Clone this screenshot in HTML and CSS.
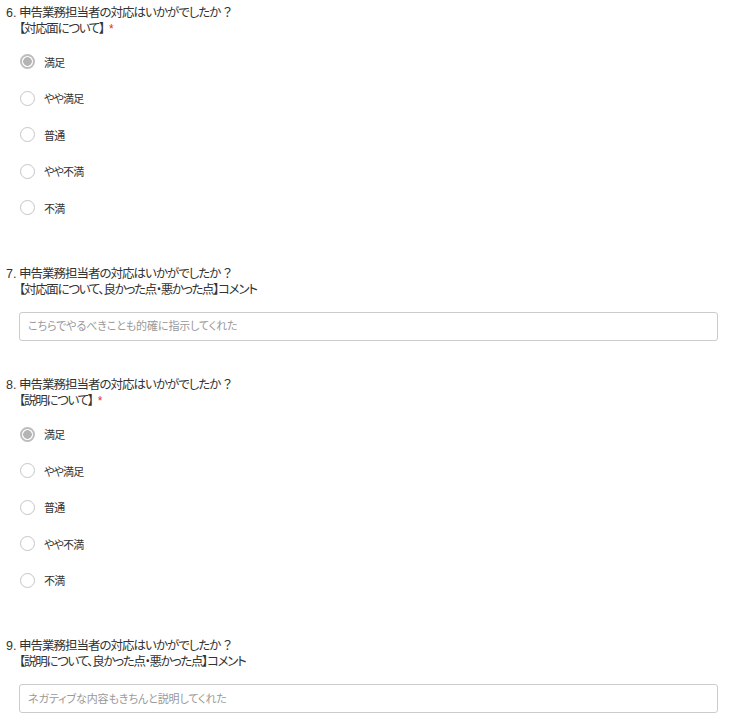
FILE: index.html
```html
<!DOCTYPE html>
<html lang="ja">
<head>
<meta charset="utf-8">
<title>アンケート</title>
<link rel="stylesheet" href="styles.css">
</head>
<body>
<form class="survey">
  <div class="question q-radio">
    <div class="q-title"><span class="q-num">6.</span><span class="q-text"><span class="line1">申告業務担当者の対応はいかがでしたか<span class="qmark">？</span></span><span class="line2">【対応面について】<span class="req">*</span></span></span></div>
    <ul class="options">
      <li class="option"><span class="radio checked"></span><span class="label">満足</span></li>
      <li class="option"><span class="radio"></span><span class="label">やや満足</span></li>
      <li class="option"><span class="radio"></span><span class="label">普通</span></li>
      <li class="option"><span class="radio"></span><span class="label">やや不満</span></li>
      <li class="option"><span class="radio"></span><span class="label">不満</span></li>
    </ul>
  </div>
  <div class="question q-text-input">
    <div class="q-title"><span class="q-num">7.</span><span class="q-text"><span class="line1">申告業務担当者の対応はいかがでしたか<span class="qmark">？</span></span><span class="line2">【対応面について、良かった点・悪かった点】コメント</span></span></div>
    <div class="answer"><input class="text-input" type="text" placeholder="こちらでやるべきことも的確に指示してくれた"></div>
  </div>
  <div class="question q-radio">
    <div class="q-title"><span class="q-num">8.</span><span class="q-text"><span class="line1">申告業務担当者の対応はいかがでしたか<span class="qmark">？</span></span><span class="line2">【説明について】<span class="req">*</span></span></span></div>
    <ul class="options">
      <li class="option"><span class="radio checked"></span><span class="label">満足</span></li>
      <li class="option"><span class="radio"></span><span class="label">やや満足</span></li>
      <li class="option"><span class="radio"></span><span class="label">普通</span></li>
      <li class="option"><span class="radio"></span><span class="label">やや不満</span></li>
      <li class="option"><span class="radio"></span><span class="label">不満</span></li>
    </ul>
  </div>
  <div class="question q-text-input">
    <div class="q-title"><span class="q-num">9.</span><span class="q-text"><span class="line1">申告業務担当者の対応はいかがでしたか<span class="qmark">？</span></span><span class="line2">【説明について、良かった点・悪かった点】コメント</span></span></div>
    <div class="answer"><input class="text-input" type="text" placeholder="ネガティブな内容もきちんと説明してくれた"></div>
  </div>
</form>
</body>
</html>
```

FILE: styles.css
```css
html, body {
  margin: 0;
  padding: 0;
  background: #fff;
}
body {
  font-family: "Liberation Sans", "Noto Sans CJK JP", sans-serif;
  font-feature-settings: "palt";
  color: #333;
  padding: 4.5px 16px 0 6px;
}
.survey {
  display: flex;
  flex-direction: column;
}
.q-title {
  display: flex;
  font-size: 12.5px;
  line-height: 16px;
  color: #333;
}
.q-num {
  width: 13px;
  flex: none;
}
.q-text {
  display: flex;
  flex-direction: column;
}
.line1 {
  letter-spacing: -1px;
}
.qmark {
  font-feature-settings: normal;
  letter-spacing: 0;
  margin-left: 1px;
}
.line2 {
  letter-spacing: -1.3px;
}
.req {
  color: #e0301e;
  font-size: 12px;
  margin-left: 5px;
  letter-spacing: 0;
}
.q-radio {
  margin-bottom: 39.5px;
}
.q-text-input {
  margin-bottom: 36.5px;
}
.options {
  list-style: none;
  margin: 7px 0 0 0;
  padding: 0 0 0 14px;
}
.option {
  display: flex;
  align-items: center;
  height: 36.5px;
}
.radio {
  box-sizing: border-box;
  width: 15px;
  height: 15px;
  border-radius: 50%;
  border: 1.2px solid #c6c6c6;
  background: #fff;
  flex: none;
}
.radio.checked {
  border: 2px solid #bdbdbd;
  background: radial-gradient(circle, #b4b4b4 0 4px, #fff 4.6px);
}
.label {
  margin-left: 9px;
  font-size: 11px;
  letter-spacing: -0.8px;
  color: #333;
}
.answer {
  margin: 14px 0 0 13px;
}
.text-input {
  display: block;
  box-sizing: border-box;
  width: 100%;
  height: 29px;
  border: 1px solid #ccc;
  border-radius: 3px;
  padding: 0 8px;
  font-family: "Liberation Sans", "Noto Sans CJK JP", sans-serif;
  font-feature-settings: "palt";
  font-size: 11px;
  letter-spacing: -0.1px;
  color: #333;
  background: #fff;
  outline: none;
}
.text-input::placeholder {
  color: #999;
}
```
